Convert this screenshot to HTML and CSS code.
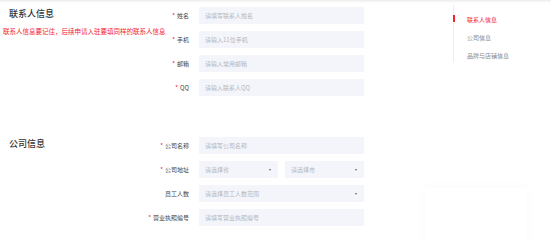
FILE: index.html
```html
<!DOCTYPE html>
<html lang="zh-CN">
<head>
<meta charset="utf-8">
<title>入驻申请</title>
<link rel="stylesheet" href="styles.css">
</head>
<body>
<div class="page">
  <main class="main">
    <section class="section section-contact">
      <div class="intro">
        <h2 class="title">联系人信息</h2>
        <p class="note">联系人信息要记住，后续申请入驻要填同样的联系人信息</p>
      </div>
      <div class="form">
        <div class="row"><label class="label req">姓名</label><input class="field" placeholder="请填写联系人姓名"></div>
        <div class="row"><label class="label req">手机</label><input class="field" placeholder="请输入11位手机"></div>
        <div class="row"><label class="label req">邮箱</label><input class="field" placeholder="请输入常用邮箱"></div>
        <div class="row"><label class="label req">QQ</label><input class="field" placeholder="请输入联系人QQ"></div>
      </div>
    </section>
    <section class="section section-company">
      <div class="intro">
        <h2 class="title">公司信息</h2>
      </div>
      <div class="form">
        <div class="row"><label class="label req">公司名称</label><input class="field" placeholder="请填写公司名称"></div>
        <div class="row"><label class="label req">公司地址</label>
          <div class="pair">
            <div class="field select"><span>请选择省</span><i class="caret"></i></div>
            <div class="field select"><span>请选择市</span><i class="caret"></i></div>
          </div>
        </div>
        <div class="row"><label class="label">员工人数</label><div class="field select"><span>请选择员工人数范围</span><i class="caret"></i></div></div>
        <div class="row"><label class="label req">营业执照编号</label><input class="field" placeholder="请填写营业执照编号"></div>
      </div>
    </section>
  </main>
  <nav class="anchor">
    <a class="anchor-item active">联系人信息</a>
    <a class="anchor-item">公司信息</a>
    <a class="anchor-item">品牌与店铺信息</a>
  </nav>
</div>
<div class="float-card"></div>
</body>
</html>
```
FILE: styles.css
```css
* { box-sizing: border-box; }
html, body { margin: 0; padding: 0; }
body {
  font-family: "Noto Sans CJK SC", "Noto Sans", sans-serif;
  background: linear-gradient(#ececec 0, #fafafa 2px, #fff 4px);
  color: #333;
  width: 551px;
  height: 240px;
  overflow: hidden;
}
.page {
  display: flex;
}
.main {
  width: 440px;
  padding-top: 7px;
}
.section {
  display: grid;
}
.section > * { grid-area: 1 / 1; }
.section-company { margin-top: 41px; }
.intro { padding-left: 9px; padding-top: 1px; }
.title {
  margin: 0;
  font-size: 9px;
  line-height: 12px;
  font-weight: 500;
  color: #333;
}
.note {
  margin: 7px 0 0 -6px;
  font-size: 6.5px;
  line-height: 9px;
  color: #f5222d;
  white-space: nowrap;
}
.form {
  display: flex;
  flex-direction: column;
  gap: 7px;
}
.row {
  display: flex;
  align-items: center;
  gap: 10px;
  height: 17px;
}
.label {
  width: 189px;
  text-align: right;
  font-size: 6px;
  color: #444;
  white-space: nowrap;
}
.label.req::before {
  content: "*";
  color: #f5222d;
  margin-right: 2px;
}
.field {
  width: 165px;
  height: 17px;
  border: none;
  outline: none;
  background: #f3f5fa;
  padding: 0 6px;
  font-family: inherit;
  font-size: 6px;
  color: #333;
  border-radius: 1px;
}
.field::placeholder { color: #b3b6bc; }
.pair {
  display: flex;
  gap: 7px;
}
.pair .field { width: 79px; }
.select {
  display: flex;
  align-items: center;
  justify-content: space-between;
  color: #b3b6bc;
}
.caret {
  width: 0;
  height: 0;
  border-left: 1.5px solid transparent;
  border-right: 1.5px solid transparent;
  border-top: 2px solid #666;
  margin-right: 1px;
}
.anchor {
  margin-left: 13px;
  margin-top: 5px;
  height: 57px;
  border-left: 1px solid #eceef2;
  display: flex;
  flex-direction: column;
  gap: 9px;
  padding-top: 10px;
}
.anchor-item {
  position: relative;
  padding-left: 13px;
  font-size: 6px;
  line-height: 9px;
  color: #888;
}
.anchor-item.active { color: #f5222d; }
.anchor-item.active::before {
  content: "";
  position: absolute;
  left: -1px;
  top: 0;
  width: 2px;
  height: 7px;
  background: #f5222d;
}
.float-card {
  position: fixed;
  left: 425px;
  top: 188px;
  width: 102px;
  height: 70px;
  background: #fff;
  box-shadow: 0 0 14px rgba(0, 0, 0, 0.025);
}
```
